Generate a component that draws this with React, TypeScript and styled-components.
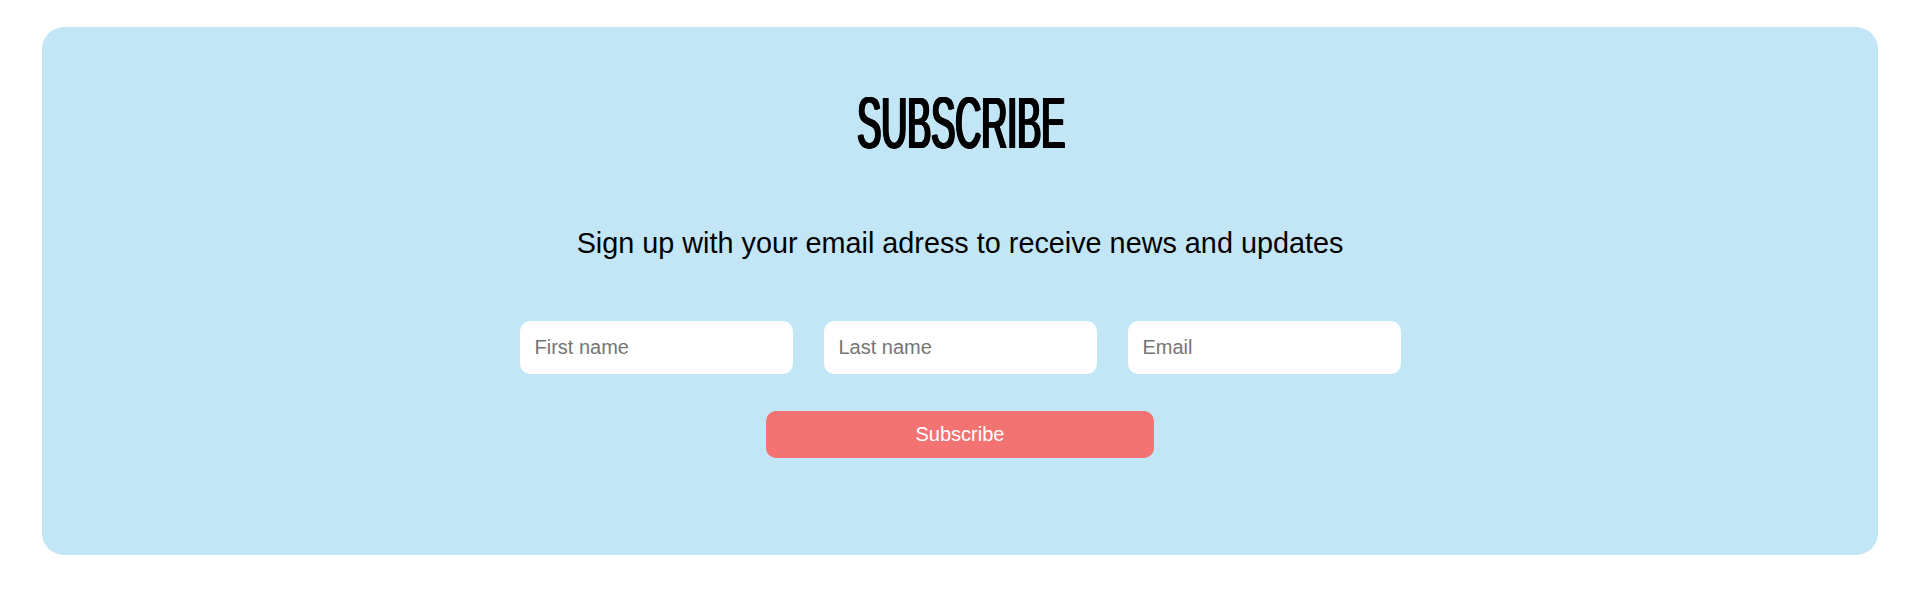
import React from "react";
import styled, { createGlobalStyle } from "styled-components";

const GlobalStyle = createGlobalStyle`
  * {
    box-sizing: border-box;
  }
  body {
    margin: 0;
    background: #ffffff;
    font-family: "Liberation Sans", Arial, sans-serif;
  }
`;

const Page = styled.div`
  padding: 27px 42px 36px;
`;

const Panel = styled.section`
  display: flex;
  flex-direction: column;
  align-items: center;
  height: 528px;
  padding-top: 60px;
  background-color: #c2e6f5;
  border-radius: 22px;
`;

// condensed display face, faked with a squeezed sans + a sideways shadow for the stems
const Title = styled.h2`
  margin: 0;
  height: 72px;
  font-family: "Liberation Sans", Arial, sans-serif;
  font-weight: 400;
  font-size: 72px;
  line-height: 72px;
  color: #000;
  transform: scaleX(0.5);
  text-shadow: 1px 0 0 #000, 2px 0 0 #000, 3px 0 0 #000, 4px 0 0 #000,
    5px 0 0 #000;
`;

const Lead = styled.p`
  margin: 68px 0 0;
  font-size: 28.8px;
  color: #000;
`;

const Fields = styled.form`
  display: flex;
  gap: 31px;
  margin-top: 61px;
`;

const Field = styled.input`
  width: 273px;
  height: 53px;
  padding: 0 15px;
  border: none;
  border-radius: 10px;
  background: #ffffff;
  font-family: "Liberation Sans", Arial, sans-serif;
  font-size: 20px;
  color: #222;
  outline: none;

  &::placeholder {
    color: #757575;
  }
`;

const Button = styled.button`
  width: 388px;
  height: 47px;
  margin-top: 37px;
  border: none;
  border-radius: 10px;
  background-color: #f37372;
  color: #ffffff;
  font-family: "Liberation Sans", Arial, sans-serif;
  font-size: 20px;
  cursor: pointer;
`;

export default function App() {
  return (
    <>
      <GlobalStyle />
      <Page>
        <Panel>
          <Title>SUBSCRIBE</Title>
          <Lead>Sign up with your email adress to receive news and updates</Lead>
          <Fields onSubmit={(e) => e.preventDefault()}>
            <Field type="text" placeholder="First name" />
            <Field type="text" placeholder="Last name" />
            <Field type="email" placeholder="Email" />
          </Fields>
          <Button type="button">Subscribe</Button>
        </Panel>
      </Page>
    </>
  );
}
